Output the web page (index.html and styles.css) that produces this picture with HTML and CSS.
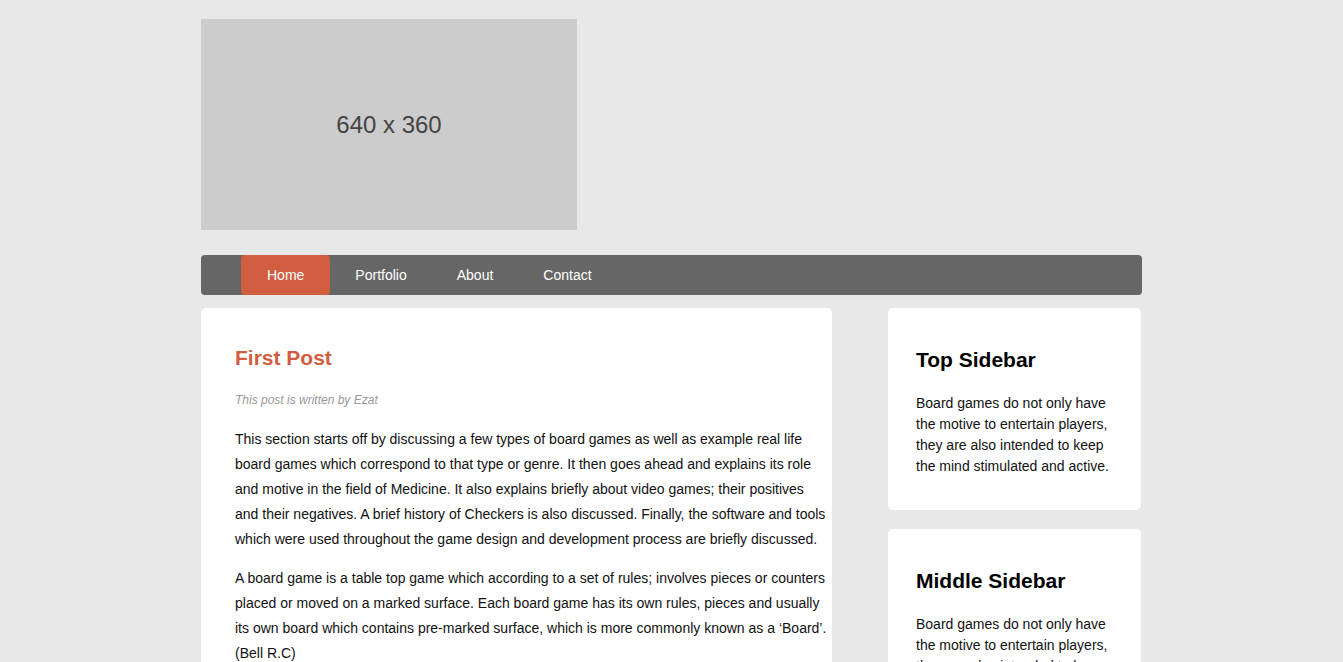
FILE: index.html
```html
<!DOCTYPE html>
<html lang="en">
<head>
<meta charset="utf-8">
<title>Board Games</title>
<link rel="stylesheet" href="styles.css">
</head>
<body>
<div class="wrap">
  <header class="header">
    <div class="placeholder">640 x 360</div>
  </header>
  <nav class="nav">
    <a class="nav-item active" href="#">Home</a>
    <a class="nav-item" href="#">Portfolio</a>
    <a class="nav-item" href="#">About</a>
    <a class="nav-item" href="#">Contact</a>
  </nav>
  <div class="layout">
    <main class="post">
      <h2 class="post-title">First Post</h2>
      <p class="byline">This post is written by Ezat</p>
      <p class="para">This section starts off by discussing a few types of board games as well as example real life board games which correspond to that type or genre. It then goes ahead and explains its role and motive in the field of Medicine. It also explains briefly about video games; their positives and their negatives. A brief history of Checkers is also discussed. Finally, the software and tools which were used throughout the game design and development process are briefly discussed.</p>
      <p class="para">A board game is a table top game which according to a set of rules; involves pieces or counters placed or moved on a marked surface. Each board game has its own rules, pieces and usually its own board which contains pre-marked surface, which is more commonly known as a ‘Board’. (Bell R.C)</p>
    </main>
    <aside class="sidebar">
      <section class="side-card">
        <h3 class="side-title">Top Sidebar</h3>
        <p class="side-text">Board games do not only have the motive to entertain players, they are also intended to keep the mind stimulated and active.</p>
      </section>
      <section class="side-card">
        <h3 class="side-title">Middle Sidebar</h3>
        <p class="side-text">Board games do not only have the motive to entertain players, they are also intended to keep the mind stimulated and active.</p>
      </section>
    </aside>
  </div>
</div>
</body>
</html>
```
FILE: styles.css
```css
html, body {
  margin: 0;
  padding: 0;
  background: #e8e8e8;
  font-family: "Liberation Sans", Arial, sans-serif;
  color: #111;
}

.wrap {
  width: 941px;
  margin: 0 auto;
}

.header {
  padding-top: 19px;
}

.placeholder {
  width: 376px;
  height: 211px;
  background: #cccccc;
  color: #444;
  font-size: 24px;
  display: flex;
  align-items: center;
  justify-content: center;
}

.nav {
  margin-top: 25px;
  height: 40px;
  background: #666666;
  border-radius: 4px;
  display: flex;
  padding-left: 40px;
}

.nav-item {
  display: flex;
  align-items: center;
  padding: 0 25px;
  color: #fff;
  text-decoration: none;
  font-size: 14px;
  border-radius: 4px;
}

.nav-item.active {
  background: #d05e3f;
  padding: 0 26px;
}

.layout {
  margin-top: 13px;
  display: flex;
  align-items: flex-start;
  gap: 56px;
}

.post {
  width: 631px;
  box-sizing: border-box;
  background: #fff;
  border-radius: 5px;
  padding: 34px 5px 34px 34px;
}

.post-title {
  margin: 4px 0 0;
  font-size: 21px;
  line-height: 24px;
  font-weight: bold;
  color: #d05e3f;
}

.byline {
  margin: 23px 0 0;
  font-size: 12px;
  line-height: 14px;
  font-style: italic;
  color: #999;
}

.para {
  margin: 20px 0 0;
  font-size: 14px;
  line-height: 25px;
  color: #111;
}

.para + .para {
  margin-top: 14px;
}

.sidebar {
  width: 253px;
  display: flex;
  flex-direction: column;
  gap: 19px;
}

.side-card {
  background: #fff;
  border-radius: 5px;
  padding: 28px 28px 33px 28px;
}

.side-title {
  margin: 12px 0 0 0;
  font-size: 21px;
  line-height: 24px;
  font-weight: bold;
  color: #000;
}

.side-text {
  margin: 21px 0 0;
  font-size: 14px;
  line-height: 21px;
  color: #111;
}
```
